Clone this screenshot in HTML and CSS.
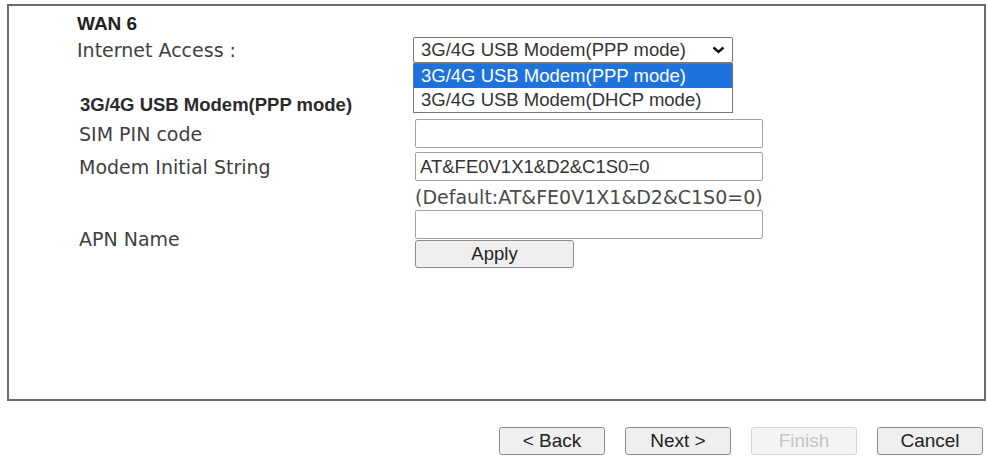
FILE: index.html
```html
<!DOCTYPE html>
<html lang="en">
<head>
  <meta charset="UTF-8">
  <title>WAN 6 - Internet Access</title>
  <link rel="stylesheet" href="styles.css">
</head>
<body>
  <div class="panel">
    <div class="title">WAN 6</div>

    <div class="row access">
      <div class="label">Internet Access :</div>
      <div class="picker">
        <div class="select">
          <span>3G/4G USB Modem(PPP mode)</span>
          <svg class="chevron" width="13" height="8" viewBox="0 0 13 8">
            <polyline points="1.5,1.5 6.5,6 11.5,1.5" fill="none" stroke="#111" stroke-width="2.4"/>
          </svg>
        </div>
        <!-- open option list -->
        <ul class="options">
          <li class="selected">3G/4G USB Modem(PPP mode)</li>
          <li>3G/4G USB Modem(DHCP mode)</li>
        </ul>
      </div>
    </div>

    <div class="row head">
      <div class="label strong">3G/4G USB Modem(PPP mode)</div>
    </div>

    <div class="row sim">
      <div class="label">SIM PIN code</div>
      <input class="field" type="text" value="">
    </div>

    <div class="row init">
      <div class="label">Modem Initial String</div>
      <input class="field" type="text" value="AT&amp;FE0V1X1&amp;D2&amp;C1S0=0">
    </div>

    <div class="row hint">
      <div class="label"></div>
      <div class="note">(Default:AT&amp;FE0V1X1&amp;D2&amp;C1S0=0)</div>
    </div>

    <div class="row apn">
      <div class="label">APN Name</div>
      <div class="stack">
        <input class="field" type="text" value="">
        <button class="btn apply" type="button">Apply</button>
      </div>
    </div>
  </div>

  <div class="actions">
    <button class="btn nav" type="button">&lt; Back</button>
    <button class="btn nav" type="button">Next &gt;</button>
    <button class="btn nav" type="button" disabled>Finish</button>
    <button class="btn nav" type="button">Cancel</button>
  </div>
</body>
</html>
```

FILE: styles.css
```css
html {
  box-sizing: border-box;
}

*, *:before, *:after {
  box-sizing: inherit;
}

body {
  margin: 0;
  background: #fff;
  font-family: "DejaVu Sans", Verdana, sans-serif;
  font-size: 19px;
  color: #3f3f3f;
}

.panel {
  height: 397px;
  margin: 4px 1px 0 7px;
  padding: 10px 0 0 68px;
  border: 2px solid #6b6b6b;
}

.title {
  height: 16px;
  line-height: 16px;
  font-family: "Liberation Sans", Arial, sans-serif;
  font-weight: bold;
  font-size: 19px;
  color: #222;
}

.row {
  display: flex;
  align-items: center;
}

.label {
  width: 338px;
  flex: none;
  white-space: nowrap;
}

.label.strong {
  font-family: "Liberation Sans", Arial, sans-serif;
  font-weight: bold;
  font-size: 18.5px;
  color: #2a2a2a;
  padding-left: 3px;
}

.row.access { margin-top: 5px; height: 26px; }
.row.head { margin-top: 31px; height: 22px; }
.row.sim { margin-top: 3px; height: 29px; }
.row.init { margin-top: 4px; height: 29px; }
.row.hint { height: 29px; }

.row.sim .label,
.row.init .label,
.row.apn .label {
  padding-left: 2px;
}

.picker {
  position: relative;
  margin-left: -2px;
}

.select {
  width: 320px;
  height: 26px;
  display: flex;
  align-items: center;
  justify-content: space-between;
  padding: 0 7px 0 7px;
  border: 1px solid #767676;
  border-radius: 2px;
  font-family: "Liberation Sans", Arial, sans-serif;
  font-size: 18.5px;
  color: #333;
}

.options {
  position: absolute;
  top: 26px;
  left: 0;
  width: 320px;
  margin: 0;
  padding: 0;
  list-style: none;
  border: 1px solid #767676;
  background: #fff;
  font-family: "Liberation Sans", Arial, sans-serif;
  font-size: 18.5px;
  color: #333;
}

.options li {
  height: 24px;
  line-height: 24px;
  padding-left: 7px;
  white-space: nowrap;
}

.options li.selected {
  background: #1e72dc;
  color: #fff;
}

.field {
  width: 348px;
  height: 29px;
  margin: 0;
  padding: 0 4px;
  border: 1px solid #a3a3a3;
  border-radius: 2px;
  font-family: "Liberation Sans", Arial, sans-serif;
  font-size: 18.5px;
  color: #333;
  background: #fff;
}

.note {
  padding-top: 2px;
  color: #4a4a4a;
  white-space: nowrap;
}

.row.apn {
  height: 58px;
}

.stack {
  display: flex;
  flex-direction: column;
  gap: 1px;
}

.btn {
  margin: 0;
  padding: 0;
  border: 1px solid #8c8c8c;
  border-radius: 3px;
  background: #efefef;
  font-family: "Liberation Sans", Arial, sans-serif;
  color: #222;
}

.btn.apply {
  width: 159px;
  height: 28px;
  font-size: 18.5px;
}

.actions {
  display: flex;
  justify-content: flex-end;
  gap: 20px;
  margin-top: 26px;
  padding-right: 4px;
}

.btn.nav {
  width: 106px;
  height: 28px;
  font-size: 19px;
}

.btn.nav:disabled {
  color: #c4c4c4;
  border-color: #d3d3d3;
  background: #f4f4f4;
}
```
